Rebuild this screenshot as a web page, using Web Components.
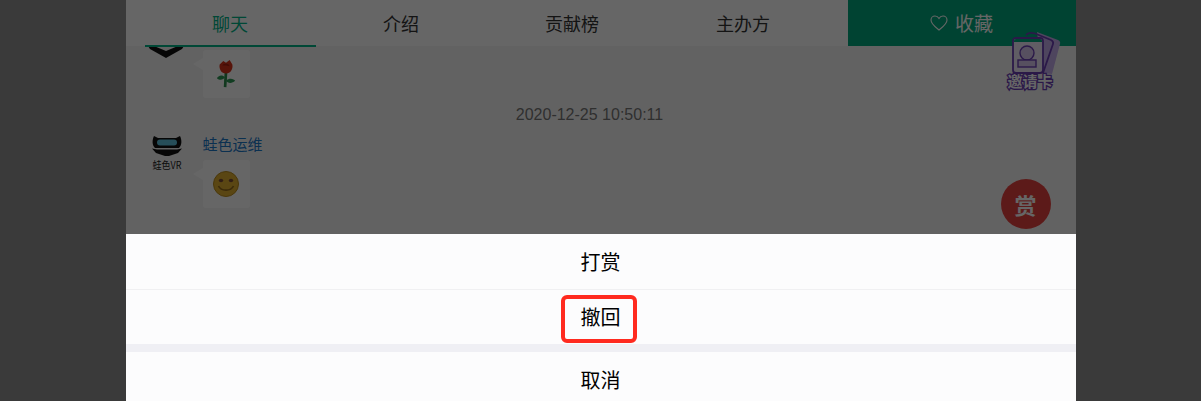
<!DOCTYPE html>
<html lang="zh">
<head>
<meta charset="utf-8">
<title>聊天</title>
<style>
  html, body { margin: 0; height: 100%; }
  body {
    background: #919191;
    font-family: "Noto Sans CJK SC", "Liberation Sans", sans-serif;
    overflow: hidden;
  }
</style>
</head>
<body>
<live-page>
  <tab-bar slot="tabs">
    <tab-item active>聊天</tab-item>
    <tab-item>介绍</tab-item>
    <tab-item>贡献榜</tab-item>
    <tab-item>主办方</tab-item>
    <collect-button>收藏</collect-button>
  </tab-bar>
  <chat-list slot="chat">
    <chat-message clipped kind="rose"></chat-message>
    <chat-time>2020-12-25 10:50:11</chat-time>
    <chat-message name="蛙色运维" kind="smile"></chat-message>
  </chat-list>
  <invite-card slot="float"></invite-card>
  <reward-button slot="float">赏</reward-button>
</live-page>
<action-sheet>
  <sheet-item>打赏</sheet-item>
  <sheet-item marked>撤回</sheet-item>
  <sheet-item cancel>取消</sheet-item>
</action-sheet>

<script>
class LivePage extends HTMLElement {
  constructor() {
    super();
    this.attachShadow({ mode: "open" });
    this.shadowRoot.innerHTML = `
    <style>
      :host { display: block; position: relative; width: 950px; height: 401px; margin: 0 auto; background: #f6f6f6; overflow: hidden; }
    </style>
    <slot name="tabs"></slot>
    <slot name="chat"></slot>
    <slot name="float"></slot>`;
  }
}

class TabBar extends HTMLElement {
  constructor() {
    super();
    this.attachShadow({ mode: "open" });
    this.shadowRoot.innerHTML = `
    <style>
      :host { display: grid; grid-template-columns: repeat(4, 171px) 1fr; padding-left: 19px; height: 46px; background: #fff; }
      ::slotted(collect-button) { margin-left: 19px; }
    </style>
    <slot></slot>`;
  }
}

class TabItem extends HTMLElement {
  constructor() {
    super();
    this.attachShadow({ mode: "open" });
    this.shadowRoot.innerHTML = `
    <style>
      :host { display: flex; align-items: center; justify-content: center; box-sizing: border-box; height: 47px; padding-bottom: 2px; font-size: 18px; color: #333; position: relative; z-index: 1; }
      :host([active]) { color: #00b387; border-bottom: 2px solid #00b387; padding-bottom: 0; }
    </style>
    <slot></slot>`;
  }
}

class CollectButton extends HTMLElement {
  constructor() {
    super();
    this.attachShadow({ mode: "open" });
    this.shadowRoot.innerHTML = `
    <style>
      :host { display: flex; align-items: center; justify-content: center; gap: 7px; height: 46px; padding-bottom: 1px; box-sizing: border-box; background: #00a87e; color: #fff; font-size: 19px; }
      svg { width: 18px; height: 16px; fill: none; stroke: #fff; stroke-width: 1.1; }
    </style>
    <svg viewBox="0 0 18 16"><path d="M9 15 C6 12.4 1 9 1 5 C1 2.6 2.9 1 5 1 C6.8 1 8.2 2 9 3.4 C9.8 2 11.2 1 13 1 C15.1 1 17 2.6 17 5 C17 9 12 12.4 9 15 Z"/></svg>
    <slot></slot>`;
  }
}

class ChatList extends HTMLElement {
  constructor() {
    super();
    this.attachShadow({ mode: "open" });
    this.shadowRoot.innerHTML = `
    <style>
      :host { display: flex; flex-direction: column; height: 188px; overflow: hidden; }
    </style>
    <slot></slot>`;
  }
}

class ChatTime extends HTMLElement {
  constructor() {
    super();
    this.attachShadow({ mode: "open" });
    this.shadowRoot.innerHTML = `
    <style>
      :host { display: block; height: 20px; margin: 7px 22px 8px 0; text-align: center; font: 16px/20px "Liberation Sans", sans-serif; color: #777; }
    </style>
    <slot></slot>`;
  }
}

class ChatMessage extends HTMLElement {
  constructor() {
    super();
    this.attachShadow({ mode: "open" });
  }

  connectedCallback() {
    const rose = `<svg viewBox="0 0 24 32" width="22" height="29">
      <path d="M12 13 L11 30" stroke="#2f8f4e" stroke-width="3" fill="none"/>
      <path d="M11 19 C7 15 3 18 2 20 C5 23 9 22 11 19 Z M12 23 C16 19 21 21 22 23 C19 26 14 26 12 23 Z" fill="#2f9a55"/>
      <path d="M5 5 L9 1 L12 3 L16 0 L19 5 C20 10 17 15 12 15 C7 15 4 10 5 5 Z" fill="#d9331a"/>
      <path d="M8 6 C10 3 15 3 16 7 C14 6 10 6 8 6 Z" fill="#a8200f"/>
    </svg>`;
    const smile = `<svg viewBox="0 0 26 26" width="26" height="26">
      <circle cx="13" cy="13" r="12.5" fill="#e0b030" stroke="#b98a1c" stroke-width="1"/>
      <ellipse cx="8" cy="9.5" rx="2.2" ry="1.8" fill="#7a4c34"/>
      <ellipse cx="18" cy="9.5" rx="2.2" ry="1.8" fill="#7a4c34"/>
      <path d="M5.5 15 C8 20.5 18 20.5 20.5 15" fill="none" stroke="#93691a" stroke-width="1.6"/>
    </svg>`;
    // the first message is scrolled mostly under the tabs, only the logo's chin shows
    const chin = `<svg class="chin" viewBox="0 0 36 12" width="36" height="12">
      <path d="M0 0 H36 L34 3 L18 12 L2 3 Z" fill="#111"/>
      <path d="M6 0 H30 L18 5 Z" fill="#f2f2f2"/>
    </svg>`;
    const avatar = `<svg class="avatar" viewBox="0 0 44 44">
      <circle cx="22" cy="22" r="22" fill="#f4f4f4"/>
      <path d="M9 3 L13 5 H31 L35 3 C37 7 37 12 34 15 H10 C7 12 7 7 9 3 Z" fill="#111"/>
      <rect x="12" y="6.5" width="20" height="6" rx="3" fill="#5fc3df"/>
      <path d="M7 15.5 L12 16.5 H32 L37 15.5 L33 20 L24 23 H20 L11 20 Z" fill="#111"/>
      <text class="logo-text" x="22" y="36" text-anchor="middle" textLength="29" lengthAdjust="spacingAndGlyphs">蛙色VR</text>
    </svg>`;
    const name = this.getAttribute("name");
    this.shadowRoot.innerHTML = `
    <style>
      :host { display: grid; grid-template-columns: 44px 1fr; column-gap: 14px; padding-left: 19px; align-items: start; height: 75px; }
      :host([clipped]) { height: 52px; padding-left: 22px; column-gap: 19px; grid-template-columns: 36px 1fr; }
      .avatar { width: 44px; height: 44px; display: block; }
      .chin { display: block; }
      .name { height: 22px; margin: 0 0 5px; font-size: 15px; line-height: 22px; color: #1c78c8; }
      .bubble { position: relative; width: 47px; height: 48px; border-radius: 3px; background: #fff; display: flex; align-items: center; justify-content: center; }
      .bubble::before { content: ""; position: absolute; left: -10px; top: 8px; border-style: solid; border-color: transparent #fff transparent transparent; border-width: 6px 10px 6px 0; }
      :host([clipped]) .right { margin-top: 4px; }
      .logo-text { font: 10px "Noto Sans CJK SC", "Liberation Sans", sans-serif; fill: #222; }
    </style>
    ${name ? avatar : chin}
    <div class="right">
      ${name ? `<div class="name">${name}</div>` : ""}
      <div class="bubble">${this.getAttribute("kind") === "rose" ? rose : smile}</div>
    </div>`;
  }
}

class InviteCard extends HTMLElement {
  constructor() {
    super();
    this.attachShadow({ mode: "open" });
    this.shadowRoot.innerHTML = `
    <style>
      :host { position: absolute; left: 874px; top: 28px; width: 62px; height: 66px; display: block; }
      text { font: 700 15px "Noto Sans CJK SC", sans-serif; fill: #fff; stroke: #6b3fb5; stroke-width: 2.6px; paint-order: stroke; }
    </style>
    <svg viewBox="0 0 62 66" width="62" height="66">
      <path d="M37 4 L58 12 C60 13 60.5 14 60 16 L52 46 L42 45 Z" fill="#c3acea"/>
      <path d="M26 7 L28 5.5 C30 4.5 32 4.5 35 5.5 L51 12 C53 13 53.5 14.5 53 16 L43 45" fill="none" stroke="#6b3fb5" stroke-width="1.8"/>
      <rect x="13" y="10" width="30" height="35" rx="3" fill="#f0e8fa" stroke="#6b3fb5" stroke-width="1.8"/>
      <path d="M14 13 C14 11.7 15 11 16 11 H40 C41 11 42 11.7 42 13 V14 H14 Z" fill="#00a87e"/>
      <circle cx="27" cy="25" r="7" fill="#d9c8f0" stroke="#6b3fb5" stroke-width="1.4"/>
      <rect x="18" y="32" width="18" height="7" fill="#d9c8f0" stroke="#6b3fb5" stroke-width="1.4"/>
      <text x="30" y="59" text-anchor="middle" textLength="45">邀请卡</text>
    </svg>`;
  }
}

class RewardButton extends HTMLElement {
  constructor() {
    super();
    this.attachShadow({ mode: "open" });
    this.shadowRoot.innerHTML = `
    <style>
      :host { position: absolute; left: 875px; top: 179px; width: 50px; height: 50px; border-radius: 50%; background: #e64340; color: #fff; font-size: 22px; font-weight: 700; display: flex; align-items: center; justify-content: center; }
    </style>
    <slot></slot>`;
  }
}

class ActionSheet extends HTMLElement {
  constructor() {
    super();
    this.attachShadow({ mode: "open" });
    this.shadowRoot.innerHTML = `
    <style>
      :host { position: fixed; inset: 0; z-index: 10; display: flex; flex-direction: column; align-items: center; background: rgba(0, 0, 0, .6); }
      .panel { margin-top: 234px; width: 950px; height: 167px; background: #efeff4; display: flex; flex-direction: column; overflow: hidden; }
    </style>
    <div class="panel"><slot></slot></div>`;
  }
}

class SheetItem extends HTMLElement {
  constructor() {
    super();
    this.attachShadow({ mode: "open" });
    this.shadowRoot.innerHTML = `
    <style>
      :host { display: flex; align-items: center; justify-content: center; flex: none; height: 55px; background: #fcfcfd; font-size: 20px; color: #000; border-bottom: 1px solid #f0f0f2; }
      :host([marked]) { height: 54px; border-bottom: 0; margin-bottom: 8px; }
      :host([cancel]) { height: 55px; border-bottom: 0; }
      span { position: relative; line-height: 28px; }
      :host([marked]) span, :host([cancel]) span { top: 0; }
      :host([marked]) span::after { content: ""; position: absolute; left: -20px; right: -16px; top: -8px; bottom: -12px; border: 4px solid #ff2a1f; border-radius: 6px; }
    </style>
    <span><slot></slot></span>`;
  }
}

customElements.define("live-page", LivePage);
customElements.define("tab-bar", TabBar);
customElements.define("tab-item", TabItem);
customElements.define("collect-button", CollectButton);
customElements.define("chat-list", ChatList);
customElements.define("chat-time", ChatTime);
customElements.define("chat-message", ChatMessage);
customElements.define("invite-card", InviteCard);
customElements.define("reward-button", RewardButton);
customElements.define("action-sheet", ActionSheet);
customElements.define("sheet-item", SheetItem);
</script>
</body>
</html>
